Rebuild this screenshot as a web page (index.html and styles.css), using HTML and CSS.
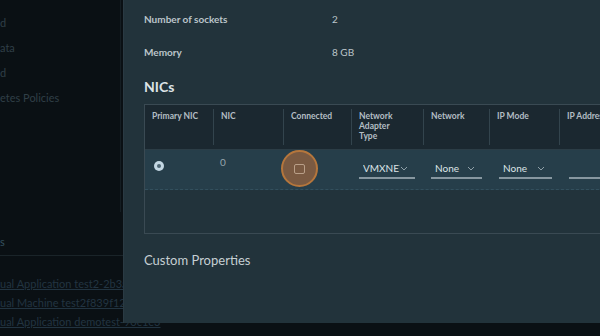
FILE: index.html
```html
<!DOCTYPE html>
<html>
<head>
<meta charset="utf-8">
<link rel="stylesheet" href="styles.css">
</head>
<body>
<div class="page">
  <aside class="side">
    <ul class="side-nav">
      <li>d</li>
      <li>ata</li>
      <li>d</li>
      <li>etes Policies</li>
    </ul>
  </aside>
  <section class="lower">
    <div class="lower-title">s</div>
    <ul class="links">
      <li><a>ual Application test2-2b3a4d0f1-8c2e</a></li>
      <li><a>ual Machine test2f839f120-aa17</a></li>
      <li><a>ual Application demotest-90c1e3</a></li>
    </ul>
  </section>
</div>

<div class="modal">
  <div class="props">
    <div class="prop"><span class="prop-k">Number of sockets</span><span class="prop-v">2</span></div>
    <div class="prop"><span class="prop-k">Memory</span><span class="prop-v">8 GB</span></div>
  </div>
  <h2 class="h-nics">NICs</h2>
  <div class="grid">
    <div class="grid-head">
      <div class="hc">Primary NIC</div>
      <div class="hc">NIC</div>
      <div class="hc">Connected</div>
      <div class="hc">Network<br>Adapter<br>Type</div>
      <div class="hc">Network</div>
      <div class="hc">IP Mode</div>
      <div class="hc last">IP Address</div>
    </div>
    <div class="grid-row">
      <div class="dc c-radio"><span class="radio"></span></div>
      <div class="dc num">0</div>
      <div class="dc c-check"><span class="ripple"><span class="cbox"></span></span></div>
      <div class="dc c-sel"><span class="sel w55"><span class="sel-t">VMXNE⁻</span><svg class="chev" viewBox="0 0 8 5" width="8" height="5"><path d="M1 1l3 3 3-3" fill="none" stroke="#8fa0a8" stroke-width="1"/></svg></span></div>
      <div class="dc c-sel"><span class="sel w50"><span class="sel-t">None</span><svg class="chev" viewBox="0 0 8 5" width="8" height="5"><path d="M1 1l3 3 3-3" fill="none" stroke="#8fa0a8" stroke-width="1"/></svg></span></div>
      <div class="dc c-sel"><span class="sel w53"><span class="sel-t">None</span><svg class="chev" viewBox="0 0 8 5" width="8" height="5"><path d="M1 1l3 3 3-3" fill="none" stroke="#8fa0a8" stroke-width="1"/></svg></span></div>
      <div class="dc c-sel"><span class="sel w60"></span></div>
    </div>
    <div class="grid-empty"></div>
  </div>
  <h3 class="h-custom">Custom Properties</h3>
</div>
</body>
</html>
```

FILE: styles.css
```css
* { box-sizing: border-box; }
html, body {
  margin: 0;
  padding: 0;
  width: 600px;
  height: 336px;
  overflow: hidden;
  background: #0a1014;
  font-family: Lato, "Open Sans", sans-serif;
}
ul { list-style: none; margin: 0; padding: 0; }

.page {
  position: relative;
  height: 336px;
  display: flex;
  flex-direction: column;
}
.side {
  width: 121px;
  height: 212px;
  border-right: 1px solid #141d22;
}
.side-nav {
  padding-top: 17px;
  display: flex;
  flex-direction: column;
  gap: 13px;
  font-size: 11px;
  line-height: 12px;
  color: #303f47;
}
.lower { flex: 1; }
.lower-title {
  margin-top: 24px;
  font-size: 11px;
  line-height: 12px;
  color: #34505f;
  padding-bottom: 7px;
  border-bottom: 1px solid #1a2429;
}
.links {
  padding-top: 21px;
  display: flex;
  flex-direction: column;
  gap: 6px;
  font-size: 11px;
  line-height: 13px;
  white-space: nowrap;
}
.links a {
  color: #223441;
  text-decoration: underline;
}

.modal {
  position: absolute;
  left: 123px;
  top: 0;
  width: 500px;
  height: 323px;
  background: #22333b;
  border-left: 1px solid #2a3a43;
  padding: 0 0 0 20px;
  color: #c3ccd0;
  overflow: hidden;
}
.props {
  padding-top: 13px;
  display: flex;
  flex-direction: column;
  gap: 20px;
}
.prop {
  display: flex;
  font-size: 10px;
  line-height: 13px;
  font-weight: 700;
}
.prop-k { width: 188px; color: #bcc5ca; }
.prop-v { font-weight: 400; color: #bcc5ca; }

.h-nics {
  margin: 19px 0 0;
  font-size: 14px;
  line-height: 18px;
  font-weight: 700;
  color: #dde3e6;
}
.grid {
  margin-top: 8px;
  width: 470px;
  border: 1px solid #3a4a53;
  border-right: none;
}
.grid-head, .grid-row {
  display: grid;
  grid-template-columns: 69px 70px 68px 72px 66px 70px 60px;
}
.grid-head {
  background: #1b2830;
  height: 45px;
  padding: 4px 0 4px;
  border-bottom: 1px solid #2c3d46;
}
.hc {
  padding: 2px 0 0 7px;
  font-size: 8.5px;
  line-height: 10px;
  font-weight: 700;
  color: #b4bec4;
  border-right: 1px solid #33444d;
}
.hc.last { border-right: none; white-space: nowrap; }
.grid-row {
  background: #263e4a;
  height: 40px;
  border-bottom: 1px dashed #33505e;
}
.dc {
  display: flex;
  align-items: flex-start;
  padding-left: 7px;
}
.c-radio { padding-top: 11px; padding-left: 9px; }
.c-check { padding-top: 0; padding-left: 0; }
.c-sel { padding-top: 10px; }
.dc.num {
  padding-top: 7px;
  padding-left: 6px;
  font-size: 10px;
  line-height: 11px;
  color: #97a6ad;
}
.radio {
  width: 10px;
  height: 10px;
  border-radius: 50%;
  background: #c3d7e3;
  display: flex;
  align-items: center;
  justify-content: center;
}
.radio::after {
  content: "";
  width: 4px;
  height: 4px;
  border-radius: 50%;
  background: #4d6673;
}
.ripple {
  width: 37px;
  height: 37px;
  border-radius: 50%;
  background: #7a5a42;
  border: 2px solid #b5763c;
  display: flex;
  align-items: center;
  justify-content: center;
  margin-left: -3px;
}
.cbox {
  width: 11px;
  height: 10px;
  border: 1px solid #b99f88;
  border-radius: 2px;
}
.sel {
  display: flex;
  align-items: center;
  height: 19px;
  padding: 0 0 1px 4px;
  border-bottom: 2px solid #8797a0;
  font-size: 10px;
  font-weight: 400;
  color: #dde4e7;
}
.w55 { width: 56px; }
.w50 { width: 51px; }
.w53 { width: 53px; margin-left: 2px; }
.w60 { width: 60px; margin-left: 2px; }
.sel-t { flex: 1; white-space: nowrap; overflow: hidden; }
.chev { margin-right: 7px; flex: none; }
.grid-empty { height: 43px; }

.h-custom {
  margin: 18px 0 0;
  font-size: 13px;
  line-height: 16px;
  font-weight: 400;
  color: #c6cfd3;
}
```
